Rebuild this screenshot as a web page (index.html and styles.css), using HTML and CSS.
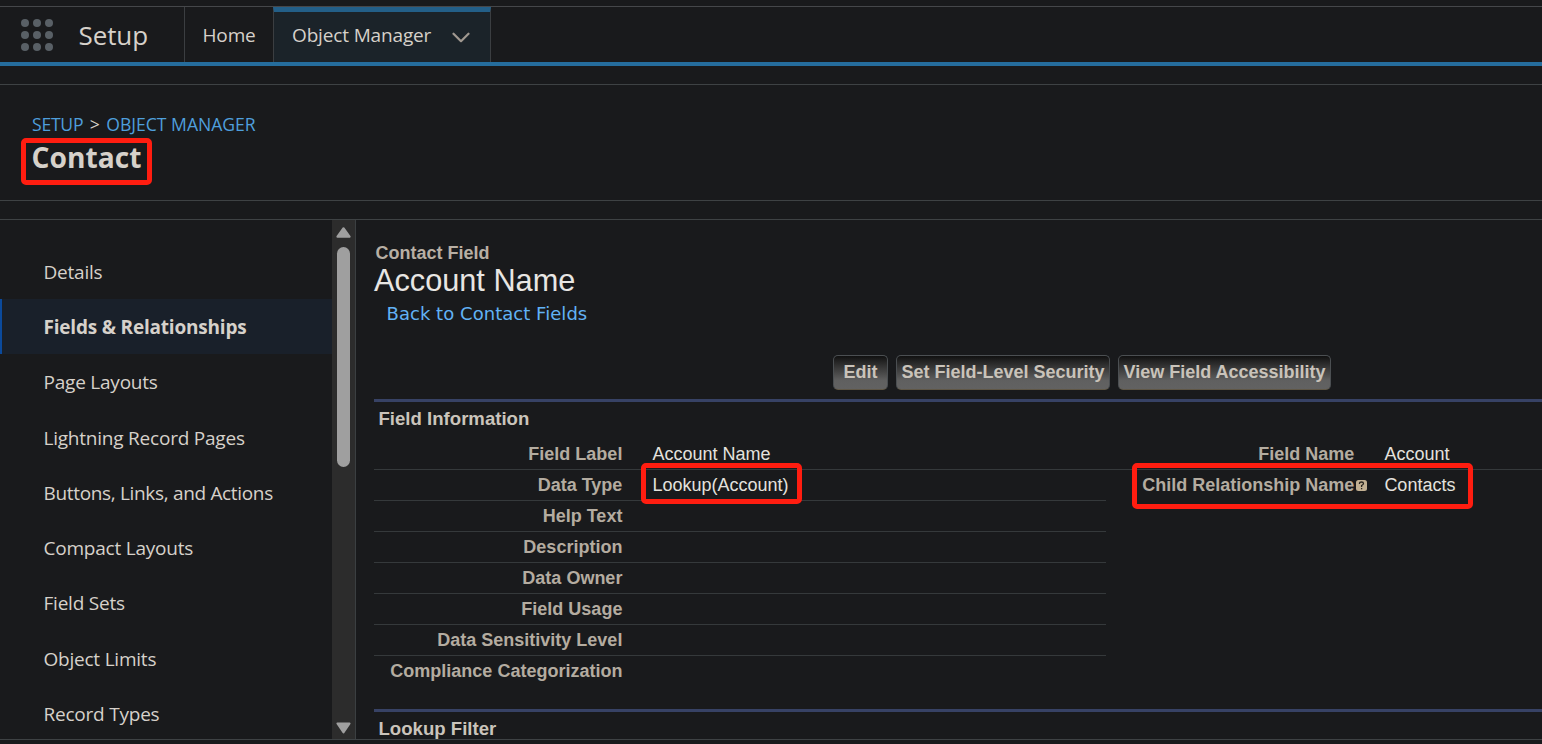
FILE: index.html
```
<!DOCTYPE html>
<html lang="en">
<head>
<meta charset="utf-8">
<title>Object Manager | Setup</title>
<link rel="stylesheet" href="styles.css">
</head>
<body>
<header class="topnav">
  <div class="launcher">
    <svg width="32" height="32" viewBox="0 0 32 32" fill="#596066"><circle cx="4" cy="4" r="4"/><circle cx="16" cy="4" r="4"/><circle cx="28" cy="4" r="4"/><circle cx="4" cy="16" r="4"/><circle cx="16" cy="16" r="4"/><circle cx="28" cy="16" r="4"/><circle cx="4" cy="28" r="4"/><circle cx="16" cy="28" r="4"/><circle cx="28" cy="28" r="4"/></svg>
    <span class="app-name">Setup</span>
  </div>
  <a class="tab home">Home</a>
  <a class="tab active">Object Manager
    <svg width="18" height="12" viewBox="0 0 18 12" fill="none" stroke="#a09890" stroke-width="2.2" stroke-linecap="round" stroke-linejoin="round"><path d="M1.500 1.700 9 9.200l7.500-7.500"/></svg>
  </a>
</header>
<section class="page-head">
  <nav class="crumbs"><a>SETUP</a><span>&gt;</span><a>OBJECT MANAGER</a></nav>
  <h1><span class="title">Contact<i class="mark mark-title"></i></span></h1>
</section>
<main class="workspace">
  <nav class="sidebar">
    <a>Details</a>
    <a class="current">Fields &amp; Relationships</a>
    <a>Page Layouts</a>
    <a>Lightning Record Pages</a>
    <a class="tight">Buttons, Links, and Actions</a>
    <a>Compact Layouts</a>
    <a>Field Sets</a>
    <a>Object Limits</a>
    <a>Record Types</a>
  </nav>
  <div class="scrollbar">
    <svg width="15" height="11" viewBox="0 0 15 11" fill="#9f9f9f" stroke="#9f9f9f" stroke-width="2" stroke-linejoin="round"><path d="M7.500 1.200 13.600 9.700H1.400z"/></svg>
    <div class="thumb"></div>
    <svg class="down" width="15" height="12" viewBox="0 0 15 12" fill="#9f9f9f" stroke="#9f9f9f" stroke-width="2" stroke-linejoin="round"><path d="M7.500 10.500 13.600 1.500H1.400z"/></svg>
  </div>
  <article class="detail">
    <p class="kind">Contact Field</p>
    <h2>Account Name</h2>
    <a class="back">Back to Contact Fields</a>
    <div class="buttons"><button class="edit">Edit</button><button class="security">Set Field-Level Security</button><button class="access">View Field Accessibility</button></div>
    <h3>Field Information</h3>
    <div class="fields">
      <div class="row wide"><span class="label">Field Label</span><span class="value">Account Name</span><span class="label second">Field Name</span><span class="value">Account</span></div>
      <div class="row"><span class="label">Data Type</span><span class="value">Lookup(Account)<i class="mark mark-type"></i></span><span class="label second">Child Relationship Name<svg class="help" width="11" height="11" viewBox="0 0 11 11"><rect width="11" height="11" rx="2.500" fill="#c3b193"/><path d="M3.500 4V3q0-1 2-1t2 1.500q0 1-1.900 2V7M5.600 8v1.300" fill="none" stroke="#29251f" stroke-width="1.300"/></svg></span><span class="value">Contacts</span><i class="mark mark-child"></i></div>
      <div class="row"><span class="label">Help Text</span></div>
      <div class="row"><span class="label">Description</span></div>
      <div class="row"><span class="label">Data Owner</span></div>
      <div class="row"><span class="label">Field Usage</span></div>
      <div class="row"><span class="label">Data Sensitivity Level</span></div>
      <div class="row last"><span class="label">Compliance Categorization</span></div>
    </div>
    <h3 class="lookup">Lookup Filter</h3>
  </article>
</main>
</body>
</html>
```
FILE: styles.css
```
* { box-sizing: border-box; }
body {
  margin: 0;
  height: 744px;
  overflow: hidden;
  padding-top: 6px;
  background: #191a1c;
  color: #d6d1ca;
  font-family: "Open Sans", "Noto Sans", sans-serif;
}
h1, h2, h3, p { margin: 0; }

.topnav {
  display: flex;
  height: 60px;
  border-top: 1px solid #45474a;
  border-bottom: 4px solid #256d9d;
}
.launcher {
  display: flex;
  align-items: center;
  width: 185px;
  padding-left: 21px;
  border-right: 1px solid #3b3e41;
}
.app-name { margin-left: 25.5px; padding-top: 1px; font-size: 26px; line-height: 36px; letter-spacing: -0.1px; }
.tab {
  display: flex;
  align-items: center;
  height: 55px;
  font-size: 19px;
  letter-spacing: -0.15px;
}
.tab.home { width: 88px; padding-left: 17.5px; }
.tab.active {
  width: 218px;
  padding: 0 20px 5px 18px;
  justify-content: space-between;
  background: #1b2329;
  border: 1px solid #3b3e41;
  border-top: 5px solid #235f88;
  border-bottom: 0;
}
.tab svg { margin-top: 7px; }

.page-head {
  height: 117px;
  margin-top: 18px;
  padding: 27px 0 0 32px;
  border-top: 1px solid #3e4244;
  border-bottom: 1px solid #3e4244;
}
.crumbs {
  display: flex;
  gap: 6.5px;
  font-size: 17.6px;
  line-height: 25px;
  letter-spacing: -0.02px;
}
.crumbs a { color: #4f9fdc; }
.crumbs a:first-child { letter-spacing: -0.25px; }
h1 { font-size: 28.2px; line-height: 40px; }
.title { position: relative; display: inline-block; left: -0.5px; }

.mark {
  position: absolute;
  border: 5px solid #ff1d10;
  border-radius: 5px;
}
.mark-title { left: -11px; top: 1px; width: 131px; height: 47px; }
.mark-type { left: -11px; top: -7px; width: 161px; height: 41px; }
.mark-child { left: 757.5px; top: -7px; width: 341px; height: 46px; }

.workspace {
  display: flex;
  height: 521px;
  margin-top: 18px;
  border-top: 1px solid #3e4244;
  border-bottom: 1px solid #3e4244;
  overflow: hidden;
}
.sidebar { flex: none; width: 332px; padding-top: 24px; }
.sidebar a {
  display: block;
  height: 55.22px;
  padding-left: 43.500px;
  font-size: 19px;
  line-height: 56px;
  letter-spacing: -0.22px;
  white-space: nowrap;
}
.sidebar a.tight { letter-spacing: -0.33px; }
.sidebar a.current {
  padding-left: 41.500px;
  border-left: 2px solid #0b4a9c;
  background: #19202a;
  font-weight: 700;
  letter-spacing: -0.2px;
}
.scrollbar {
  display: flex;
  flex: none;
  flex-direction: column;
  align-items: center;
  width: 24px;
  padding: 7px 1px 5px 0;
  background: #2c2c2c;
  border-right: 1px solid #3b3f41;
}
.scrollbar svg { flex: none; }
.thumb { width: 13px; height: 220px; margin-top: 9px; border-radius: 7px; background: #9f9f9f; }
.down { margin-top: auto; }

.detail {
  flex: 1;
  min-width: 0;
  padding: 22px 0 0 18px;
  font-family: "Liberation Sans", Arial, sans-serif;
  font-size: 18px;
}
.kind { padding-left: 1.5px; line-height: 22px; font-weight: 700; color: #b8afa4; }
h2 { height: 34px; font-size: 30.7px; line-height: 34px; font-weight: 400; color: #e8e6e3; }
.back {
  display: block;
  padding-left: 12.5px;
  font-family: "DejaVu Sans", Verdana, sans-serif;
  line-height: 31px;
  letter-spacing: 0.04px;
  color: #62b2f5;
}
.buttons { display: flex; gap: 8px; height: 35px; margin: 26px 0 9px 459px; }
button {
  padding: 0;
  border: 1px solid #4b4f52;
  border-bottom-color: #605746;
  border-radius: 5px;
  background: linear-gradient(#111 0, #2d2d2d 25%, #606060 75%, #626262);
  font: 700 18px "Liberation Sans", Arial, sans-serif;
  color: #c9c3ba;
  white-space: nowrap;
}
.edit { width: 55px; }
.security { width: 214px; }
.access { width: 213px; }
h3 {
  height: 40px;
  padding-left: 4.5px;
  border-top: 3px solid #374265;
  font-size: 18.6px;
  line-height: 33px;
  color: #cac4bb;
}
.row {
  position: relative;
  display: flex;
  width: 732px;
  height: 31px;
  border-bottom: 1px solid #35393b;
  line-height: 30px;
}
.row.wide { width: auto; }
.row.last { border-bottom: 0; }
.label { flex: none; width: 248.4px; text-align: right; font-weight: 700; color: #b4aca0; }
.value { position: relative; flex: none; width: 453.6px; margin-left: 30px; color: #e4e2de; }
.label.second { white-space: nowrap; }
.help { display: inline-block; margin: 0 -13px 2px 2px; vertical-align: middle; }
.lookup { margin-top: 22px; }
```
